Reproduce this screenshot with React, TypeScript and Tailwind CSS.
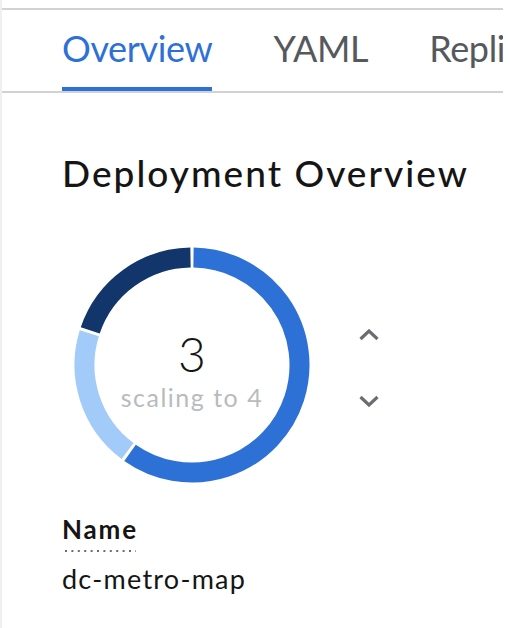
const TABS = ["Overview", "YAML", "ReplicaSets", "Pods"] as const;

const RING = [
  { from: 0, to: 216, color: "#2e71d6" },
  { from: 216, to: 288, color: "#a2cbf9" },
  { from: 288, to: 360, color: "#12356b" },
] as const;

const font = { fontFamily: "Lato, 'Open Sans', sans-serif" };

function point(cx: number, cy: number, r: number, deg: number) {
  const a = (deg * Math.PI) / 180;
  return [cx + r * Math.sin(a), cy - r * Math.cos(a)];
}

function arcPath(cx: number, cy: number, r: number, from: number, to: number) {
  const [x0, y0] = point(cx, cy, r, from);
  const [x1, y1] = point(cx, cy, r, to);
  const large = to - from > 180 ? 1 : 0;
  return `M ${x0} ${y0} A ${r} ${r} 0 ${large} 1 ${x1} ${y1}`;
}

function PodRing() {
  return (
    <div className="relative h-[240px] w-[240px]">
      <svg width="240" height="240" viewBox="0 0 240 240">
        {RING.map((seg) => (
          <path
            key={seg.from}
            d={arcPath(120, 120, 107.5, seg.from + 0.8, seg.to - 0.8)}
            fill="none"
            stroke={seg.color}
            strokeWidth="20"
          />
        ))}
      </svg>
      <div className="absolute inset-0 flex flex-col items-center justify-center pt-[10px]">
        <span className="text-[48px] leading-[52px] font-light text-[#151515]">3</span>
        <span className="mt-[2px] text-[25px] leading-[30px] tracking-[0.06em] text-[#b8bbbe]">
          scaling to 4
        </span>
      </div>
    </div>
  );
}

function Chevron({ down }: { down?: boolean }) {
  return (
    <svg width="20" height="12" viewBox="0 0 20 12">
      <path
        d={down ? "M1.5 2 L10 10 L18.5 2" : "M1.5 10 L10 2 L18.5 10"}
        fill="none"
        stroke="#6a6e73"
        strokeWidth="3.2"
      />
    </svg>
  );
}

export default function App() {
  return (
    <div className="flex h-[628px] w-[510px] bg-white" style={font}>
      <div className="w-[2px] shrink-0 bg-[#efefef]" />
      <div className="w-[501px] shrink-0 overflow-hidden pt-2">
        <div className="border-t-2 border-[#d2d2d2]">
          <div className="flex gap-[61px] border-b-2 border-[#d2d2d2] pl-[60px] whitespace-nowrap">
            {TABS.map((tab, i) => (
              <div
                key={tab}
                className={
                  i === 0
                    ? "border-b-4 border-[#2e71d6] pt-[16px] pb-[17px] text-[36px] leading-[44px] tracking-[-0.01em] text-[#2e71d6]"
                    : "border-b-4 border-transparent pt-[16px] pb-[17px] text-[36px] leading-[44px] tracking-[-0.01em] text-[#55595d]"
                }
              >
                {tab}
              </div>
            ))}
          </div>
        </div>

        <div className="pl-[60px]">
          <h1 className="mt-[58px] text-[37px] leading-[43px] font-medium tracking-[0.055em] text-[#151515] whitespace-nowrap">
            Deployment Overview
          </h1>

          <div className="mt-[51px] flex items-start">
            <div className="ml-[10px]">
              <PodRing />
            </div>
            <div className="mt-[84px] ml-[47px] flex flex-col gap-[54px]">
              <Chevron />
              <Chevron down />
            </div>
          </div>

          <dl className="mt-[30px]">
            <dt className="inline-block text-[26px] leading-[29px] font-bold tracking-[0.07em] text-[#151515]">
              Name
              <svg className="mt-[6px] block" width="76" height="2" viewBox="0 0 76 2">
                <line
                  x1="3"
                  y1="1"
                  x2="74"
                  y2="1"
                  stroke="#6a6e73"
                  strokeWidth="2"
                  strokeDasharray="2 4.4"
                />
              </svg>
            </dt>
            <dd className="mt-[11px] text-[27px] leading-[31px] tracking-[0.046em] text-[#151515]">
              dc-metro-map
            </dd>
          </dl>
        </div>
      </div>
    </div>
  );
}
